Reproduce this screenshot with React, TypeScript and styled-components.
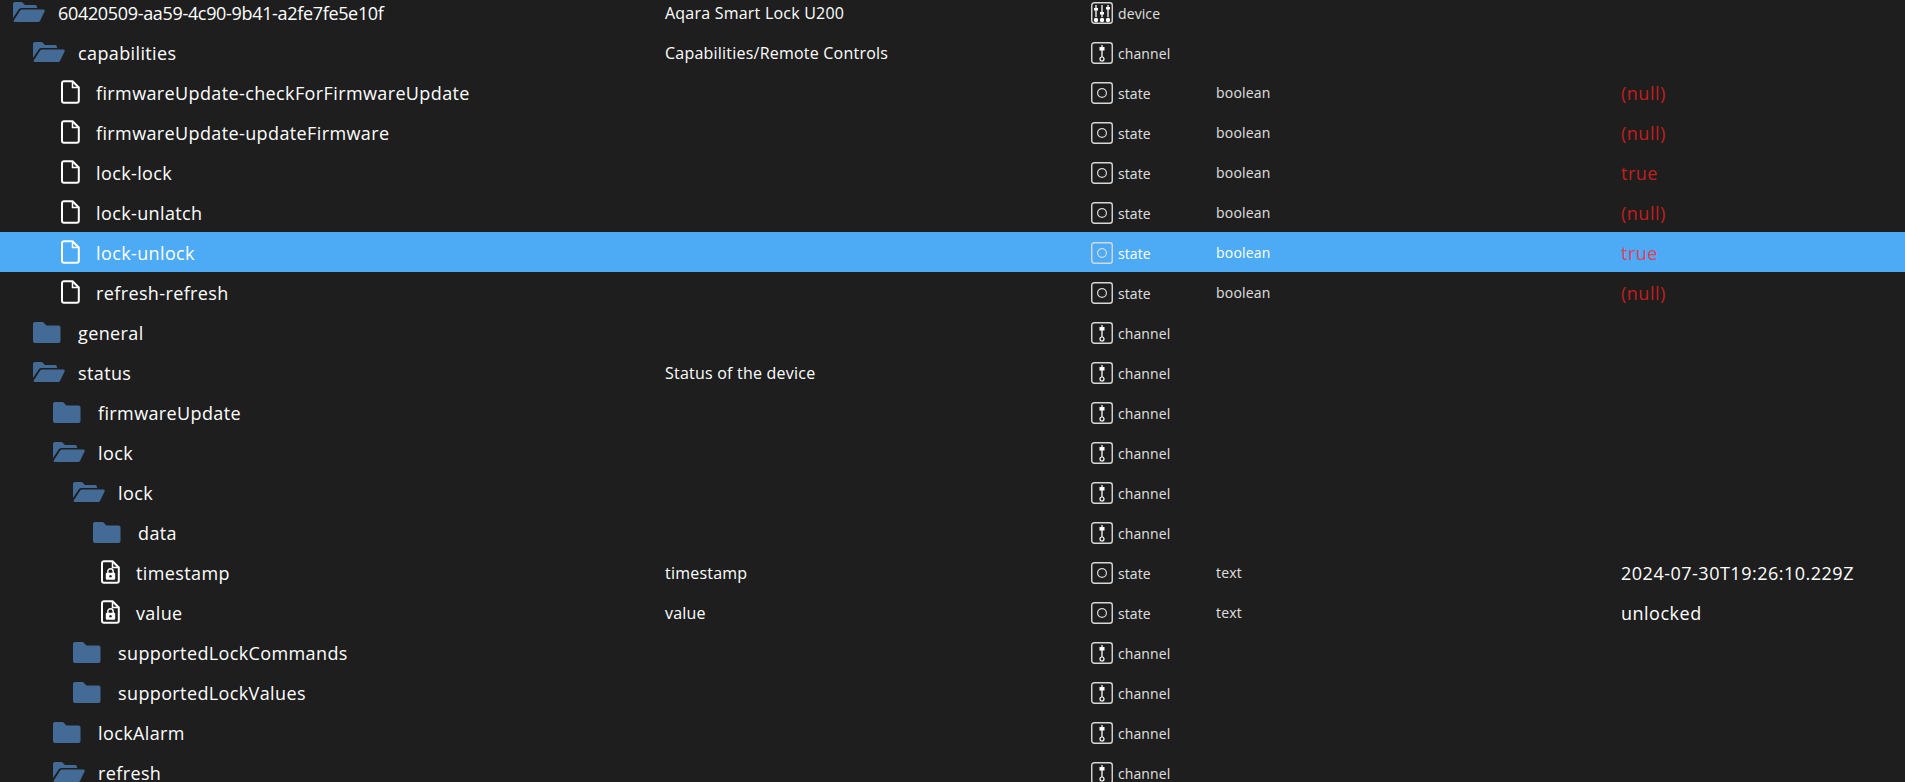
import styled, { createGlobalStyle } from "styled-components";

type Kind = "open" | "closed" | "file" | "locked";
type ObjType = "device" | "channel" | "state";

interface TreeRow {
  name: string;
  depth: number;
  kind: Kind;
  label?: string;
  type: ObjType;
  role?: string;
  value?: string;
  alert?: boolean;
  selected?: boolean;
}

const rows: TreeRow[] = [
  { name: "60420509-aa59-4c90-9b41-a2fe7fe5e10f", depth: 0, kind: "open", label: "Aqara Smart Lock U200", type: "device" },
  { name: "capabilities", depth: 1, kind: "open", label: "Capabilities/Remote Controls", type: "channel" },
  { name: "firmwareUpdate-checkForFirmwareUpdate", depth: 2, kind: "file", type: "state", role: "boolean", value: "(null)", alert: true },
  { name: "firmwareUpdate-updateFirmware", depth: 2, kind: "file", type: "state", role: "boolean", value: "(null)", alert: true },
  { name: "lock-lock", depth: 2, kind: "file", type: "state", role: "boolean", value: "true", alert: true },
  { name: "lock-unlatch", depth: 2, kind: "file", type: "state", role: "boolean", value: "(null)", alert: true },
  { name: "lock-unlock", depth: 2, kind: "file", type: "state", role: "boolean", value: "true", alert: true, selected: true },
  { name: "refresh-refresh", depth: 2, kind: "file", type: "state", role: "boolean", value: "(null)", alert: true },
  { name: "general", depth: 1, kind: "closed", type: "channel" },
  { name: "status", depth: 1, kind: "open", label: "Status of the device", type: "channel" },
  { name: "firmwareUpdate", depth: 2, kind: "closed", type: "channel" },
  { name: "lock", depth: 2, kind: "open", type: "channel" },
  { name: "lock", depth: 3, kind: "open", type: "channel" },
  { name: "data", depth: 4, kind: "closed", type: "channel" },
  { name: "timestamp", depth: 4, kind: "locked", label: "timestamp", type: "state", role: "text", value: "2024-07-30T19:26:10.229Z" },
  { name: "value", depth: 4, kind: "locked", label: "value", type: "state", role: "text", value: "unlocked" },
  { name: "supportedLockCommands", depth: 3, kind: "closed", type: "channel" },
  { name: "supportedLockValues", depth: 3, kind: "closed", type: "channel" },
  { name: "lockAlarm", depth: 2, kind: "closed", type: "channel" },
  { name: "refresh", depth: 2, kind: "open", type: "channel" },
];

const GlobalStyle = createGlobalStyle`
  html, body {
    margin: 0;
    height: 100%;
    background: #1e1e1e;
    overflow: hidden;
  }
`;

const Page = styled.div`
  height: 782px;
  overflow: hidden;
  background: #1e1e1e;
  font-family: "Open Sans", "Noto Sans", sans-serif;
  color: #fff;
`;

const List = styled.div`
  margin-top: -8px;
`;

const Row = styled.div<{ $selected?: boolean }>`
  display: grid;
  grid-template-columns: 665px 426px 125px 405px 1fr;
  align-items: center;
  height: 40px;
  color: ${(p) => (p.$selected ? "#fff" : "#e0e0e0")};
  background: ${(p) => (p.$selected ? "#4dabf5" : "transparent")};
`;

const NameCell = styled.div<{ $depth: number; $file: boolean }>`
  display: flex;
  align-items: center;
  padding-left: ${(p) => (p.$file ? 21 : 13) + p.$depth * 20}px;
  white-space: nowrap;
`;

const IconSlot = styled.span<{ $file: boolean }>`
  display: flex;
  align-items: center;
  flex: none;
  width: ${(p) => (p.$file ? 35 : 45)}px;
`;

const Name = styled.span<{ $tight: boolean }>`
  padding-top: 2px;
  font-size: 18px;
  letter-spacing: ${(p) => (p.$tight ? "-0.33px" : "0.38px")};
  color: #fff;
`;

const LabelCell = styled.div`
  padding-top: 1px;
  font-size: 16px;
  letter-spacing: 0.22px;
  white-space: nowrap;
  color: #fff;
`;

const TypeCell = styled.div`
  display: flex;
  align-items: center;
  gap: 5px;
  padding-top: 2px;
  font-size: 14px;
  letter-spacing: 0.1px;
`;

const RoleCell = styled.div`
  font-size: 14px;
  letter-spacing: 0.2px;
`;

const ValueCell = styled.div<{ $alert?: boolean; $selected?: boolean }>`
  padding-top: 1px;
  font-size: 18px;
  letter-spacing: 0.5px;
  white-space: nowrap;
  color: ${(p) => (p.$selected ? "#e0405f" : p.$alert ? "#c21f1f" : "#fff")};
`;

const TypeIconBox = styled.svg`
  display: block;
  flex: none;
`;

function FolderOpen() {
  return (
    <svg width="32" height="22" viewBox="0 0 32 22" fill="#436b95">
      <path d="M0 17V3a2 2 0 0 1 2-2h7l3 3h10a2 2 0 0 1 2 2v1H8.5a3.5 3.5 0 0 0-3 1.8L0 17Z" />
      <path d="M7.2 9.6A2 2 0 0 1 9 8.6h21.6a1.2 1.2 0 0 1 1 1.8L27 19.9a2.2 2.2 0 0 1-1.9 1.1H1.6a1 1 0 0 1-.9-1.5L7.2 9.6Z" />
    </svg>
  );
}

function FolderClosed() {
  return (
    <svg width="28" height="22" viewBox="0 0 28 22" fill="#436b95">
      <path d="M0 3a2 2 0 0 1 2-2h8l3.5 3.5H25.500a2 2 0 0 1 2 2V20a2 2 0 0 1-2 2H2a2 2 0 0 1-2-2V3Z" />
    </svg>
  );
}

function FileIcon({ locked }: { locked?: boolean }) {
  return (
    <svg width="19" height="24" viewBox="0 0 19 24" fill="none">
      <path
        d="M3 1.200h8.500L17.800 7.500V20.800a2 2 0 0 1-2 2H3a2 2 0 0 1-2-2V3.200a2 2 0 0 1 2-2Z"
        stroke="#fff"
        strokeWidth="2"
        strokeLinejoin="round"
      />
      <path d="M11.500 1.500V7.500H17.500" stroke="#fff" strokeWidth="1.500" />
      {locked && (
        <>
          <path d="M6.800 13v-1.600a2.700 2.700 0 0 1 5.400 0V13" stroke="#fff" strokeWidth="1.400" />
          <rect x="4.800" y="12.800" width="9.400" height="7" rx="1" fill="#fff" />
          <circle cx="9.500" cy="16.300" r="1.200" fill="#1e1e1e" />
        </>
      )}
    </svg>
  );
}

function TypeIcon({ type }: { type: ObjType }) {
  return (
    <TypeIconBox width="22" height="22" viewBox="0 0 22 22" fill="none">
      <rect x="0.750" y="0.750" width="20.500" height="20.500" rx="2.500" stroke="#d8d8d8" strokeWidth="1.400" />
      {type === "state" && <circle cx="11" cy="11" r="4.400" stroke="#d8d8d8" strokeWidth="1.200" />}
      {type === "channel" && (
        <>
          <path d="M11 3v12" stroke="#fff" strokeWidth="1.300" />
          <rect x="8.500" y="5" width="5" height="3.500" fill="#fff" />
          <circle cx="11" cy="17" r="2" stroke="#fff" strokeWidth="1.200" />
        </>
      )}
      {type === "device" && (
        <>
          <path d="M5 3v12M11 3v12M17 3v12" stroke="#fff" strokeWidth="1.300" />
          <rect x="3" y="6" width="4" height="2.500" fill="#fff" />
          <rect x="9" y="10" width="4" height="2.500" fill="#fff" />
          <rect x="15" y="5" width="4" height="2.500" fill="#fff" />
          <circle cx="5" cy="18" r="2.200" fill="#fff" />
          <circle cx="11" cy="18" r="2.200" fill="#fff" />
          <circle cx="17" cy="18" r="2.200" fill="#fff" />
        </>
      )}
    </TypeIconBox>
  );
}

function RowIcon({ kind }: { kind: Kind }) {
  if (kind === "open") return <FolderOpen />;
  if (kind === "closed") return <FolderClosed />;
  return <FileIcon locked={kind === "locked"} />;
}

export default function App() {
  return (
    <Page>
      <GlobalStyle />
      <List>
        {rows.map((row, idx) => {
          const isFile = row.kind === "file" || row.kind === "locked";
          return (
            <Row key={idx} $selected={row.selected}>
              <NameCell $depth={row.depth} $file={isFile}>
                <IconSlot $file={isFile}>
                  <RowIcon kind={row.kind} />
                </IconSlot>
                <Name $tight={row.depth === 0}>{row.name}</Name>
              </NameCell>
              <LabelCell>{row.label}</LabelCell>
              <TypeCell>
                <TypeIcon type={row.type} />
                {row.type}
              </TypeCell>
              <RoleCell>{row.role}</RoleCell>
              <ValueCell $alert={row.alert} $selected={row.selected}>
                {row.value}
              </ValueCell>
            </Row>
          );
        })}
      </List>
    </Page>
  );
}
